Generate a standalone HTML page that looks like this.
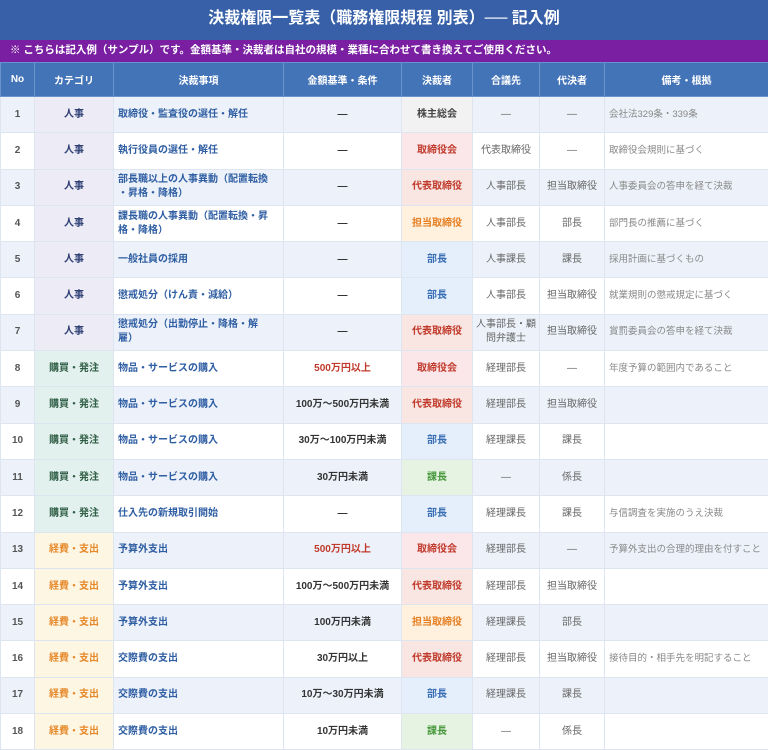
<!DOCTYPE html>
<html><head><meta charset="utf-8">
<style>
*{margin:0;padding:0;box-sizing:border-box}
body{width:768px;height:732px;overflow:hidden;background:#fff;font-family:"Liberation Sans","Noto Sans CJK JP",sans-serif}
.title{height:40px;background:#3760a8;color:#fff;font-size:16px;font-weight:bold;text-align:center;line-height:38px}
.note{height:22px;background:#7a1fa2;color:#fff;font-size:10.5px;font-weight:bold;line-height:21px;padding-left:10px}
table{border-collapse:collapse;table-layout:fixed;width:768px}
th{background:#4474b8;color:#fff;font-size:10px;font-weight:bold;height:34px;border:1px solid #6b93cc;vertical-align:middle}
tbody tr{height:36.3px}
td{border:1px solid #dde5f0;font-size:10px;text-align:center;color:#666;padding:0 3px;line-height:14px;vertical-align:middle}
tr:nth-child(odd) td{background:#edf2fa}
tr:nth-child(even) td{background:#fff}
td.no{color:#555;font-weight:bold}
td.it{text-align:left;color:#2f5ea3;font-weight:bold;padding-left:4px}
td.amt{font-weight:bold;color:#333}
td.amt.r{color:#c0392b}
td.rm{text-align:left;color:#888;padding-left:4px;font-size:9.5px;white-space:nowrap;overflow:hidden}
tr td.h{background:#ecebf6;color:#2e3f73;font-weight:bold}
tr td.p{background:#e3f1ee;color:#2f5e45;font-weight:bold}
tr td.k{background:#fdf6e3;color:#e6892a;font-weight:bold}
tr td.d0{background:#f2f2f2;color:#444;font-weight:bold}
tr td.d1{background:#fbe7ea;color:#c0392b;font-weight:bold}
tr td.d2{background:#f9e5e1;color:#c0392b;font-weight:bold}
tr td.d3{background:#fff1de;color:#e67e22;font-weight:bold}
tr td.d4{background:#e5effb;color:#3a6fb5;font-weight:bold}
tr td.d5{background:#e6f3e3;color:#4a9a3e;font-weight:bold}
</style></head><body>
<div class="title">決裁権限一覧表（職務権限規程 別表）── 記入例</div>
<div class="note">※ こちらは記入例（サンプル）です。金額基準・決裁者は自社の規模・業種に合わせて書き換えてご使用ください。</div>
<table>
<colgroup><col style="width:34px"><col style="width:79px"><col style="width:170px"><col style="width:118px"><col style="width:71px"><col style="width:67px"><col style="width:65px"><col style="width:164px"></colgroup>
<thead><tr><th>No</th><th>カテゴリ</th><th>決裁事項</th><th>金額基準・条件</th><th>決裁者</th><th>合議先</th><th>代決者</th><th>備考・根拠</th></tr></thead>
<tbody>
<tr><td class="no">1</td><td class="h">人事</td><td class="it">取締役・監査役の選任・解任</td><td class="amt">—</td><td class="d0">株主総会</td><td>—</td><td>—</td><td class="rm">会社法329条・339条</td></tr>
<tr><td class="no">2</td><td class="h">人事</td><td class="it">執行役員の選任・解任</td><td class="amt">—</td><td class="d1">取締役会</td><td>代表取締役</td><td>—</td><td class="rm">取締役会規則に基づく</td></tr>
<tr><td class="no">3</td><td class="h">人事</td><td class="it">部長職以上の人事異動（配置転換<br>・昇格・降格）</td><td class="amt">—</td><td class="d2">代表取締役</td><td>人事部長</td><td>担当取締役</td><td class="rm">人事委員会の答申を経て決裁</td></tr>
<tr><td class="no">4</td><td class="h">人事</td><td class="it">課長職の人事異動（配置転換・昇<br>格・降格）</td><td class="amt">—</td><td class="d3">担当取締役</td><td>人事部長</td><td>部長</td><td class="rm">部門長の推薦に基づく</td></tr>
<tr><td class="no">5</td><td class="h">人事</td><td class="it">一般社員の採用</td><td class="amt">—</td><td class="d4">部長</td><td>人事課長</td><td>課長</td><td class="rm">採用計画に基づくもの</td></tr>
<tr><td class="no">6</td><td class="h">人事</td><td class="it">懲戒処分（けん責・減給）</td><td class="amt">—</td><td class="d4">部長</td><td>人事部長</td><td>担当取締役</td><td class="rm">就業規則の懲戒規定に基づく</td></tr>
<tr><td class="no">7</td><td class="h">人事</td><td class="it">懲戒処分（出勤停止・降格・解<br>雇）</td><td class="amt">—</td><td class="d2">代表取締役</td><td>人事部長・顧<br>問弁護士</td><td>担当取締役</td><td class="rm">賞罰委員会の答申を経て決裁</td></tr>
<tr><td class="no">8</td><td class="p">購買・発注</td><td class="it">物品・サービスの購入</td><td class="amt r">500万円以上</td><td class="d1">取締役会</td><td>経理部長</td><td>—</td><td class="rm">年度予算の範囲内であること</td></tr>
<tr><td class="no">9</td><td class="p">購買・発注</td><td class="it">物品・サービスの購入</td><td class="amt">100万〜500万円未満</td><td class="d2">代表取締役</td><td>経理部長</td><td>担当取締役</td><td class="rm"></td></tr>
<tr><td class="no">10</td><td class="p">購買・発注</td><td class="it">物品・サービスの購入</td><td class="amt">30万〜100万円未満</td><td class="d4">部長</td><td>経理課長</td><td>課長</td><td class="rm"></td></tr>
<tr><td class="no">11</td><td class="p">購買・発注</td><td class="it">物品・サービスの購入</td><td class="amt">30万円未満</td><td class="d5">課長</td><td>—</td><td>係長</td><td class="rm"></td></tr>
<tr><td class="no">12</td><td class="p">購買・発注</td><td class="it">仕入先の新規取引開始</td><td class="amt">—</td><td class="d4">部長</td><td>経理課長</td><td>課長</td><td class="rm">与信調査を実施のうえ決裁</td></tr>
<tr><td class="no">13</td><td class="k">経費・支出</td><td class="it">予算外支出</td><td class="amt r">500万円以上</td><td class="d1">取締役会</td><td>経理部長</td><td>—</td><td class="rm">予算外支出の合理的理由を付すこと</td></tr>
<tr><td class="no">14</td><td class="k">経費・支出</td><td class="it">予算外支出</td><td class="amt">100万〜500万円未満</td><td class="d2">代表取締役</td><td>経理部長</td><td>担当取締役</td><td class="rm"></td></tr>
<tr><td class="no">15</td><td class="k">経費・支出</td><td class="it">予算外支出</td><td class="amt">100万円未満</td><td class="d3">担当取締役</td><td>経理課長</td><td>部長</td><td class="rm"></td></tr>
<tr><td class="no">16</td><td class="k">経費・支出</td><td class="it">交際費の支出</td><td class="amt">30万円以上</td><td class="d2">代表取締役</td><td>経理部長</td><td>担当取締役</td><td class="rm">接待目的・相手先を明記すること</td></tr>
<tr><td class="no">17</td><td class="k">経費・支出</td><td class="it">交際費の支出</td><td class="amt">10万〜30万円未満</td><td class="d4">部長</td><td>経理課長</td><td>課長</td><td class="rm"></td></tr>
<tr><td class="no">18</td><td class="k">経費・支出</td><td class="it">交際費の支出</td><td class="amt">10万円未満</td><td class="d5">課長</td><td>—</td><td>係長</td><td class="rm"></td></tr>
</tbody></table>
</body></html>
